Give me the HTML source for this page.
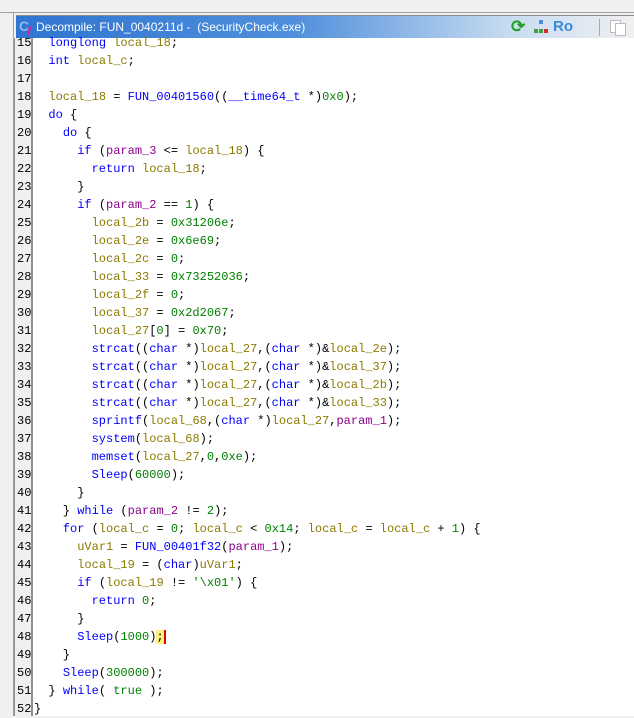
<!DOCTYPE html>
<html><head><style>
body{margin:0;width:634px;height:716px;overflow:hidden;background:#f0f0f0;position:relative;font-family:"Liberation Sans",sans-serif}
#top{position:absolute;left:0;top:0;width:634px;height:12px;background:#f0f0f0;border-bottom:1px solid #a0a0a0}
#leftp{position:absolute;left:0;top:13px;width:13px;height:703px;background:#f0f0f0;border-right:1px solid #a0a0a0}
#title{position:absolute;left:16px;top:15px;width:618px;height:23px;background:linear-gradient(90deg,#2f74d0 0%,#4f8fdc 45%,#c8dcf0 80%,#f0f0f0 100%);border-top:1px solid #888}
#title .t{position:absolute;left:20px;top:4px;color:#fff;font-size:12px;white-space:pre}
#title .ic{position:absolute;left:3px;top:2px;font:bold 14px "Liberation Sans",sans-serif;color:#8ab8f0}
#title .ic b{position:absolute;left:8px;top:6px;color:#e020a0;font-size:12px;font-style:italic}
#gut{position:absolute;left:14px;top:38px;width:16px;height:678px;background:#f0f0f0;border-right:2px solid #909090;border-left:1px solid #909090}
#code{position:absolute;left:33px;top:38px;width:601px;height:678px;background:#fff}
pre{margin:0;font:12px/18px "Liberation Mono",monospace;position:absolute;top:-4px;color:#000}
#nums{left:-16px}
#src{left:1px}
.k{color:#0000ff}.f{color:#0000ff}.v{color:#8c7a00}.p{color:#8b008b}.n{color:#008000}
.cur{background:#fff080;border-right:2px solid #e00000}
</style></head><body>
<div id="top"></div>
<div id="leftp"></div>
<div id="title"><div class="ic">C<b>f</b></div><div class="t">Decompile: FUN_0040211d -  (SecurityCheck.exe)</div>
<div style="position:absolute;left:495px;top:1px;color:#20a020;font:bold 17px sans-serif">⟳</div>
<div style="position:absolute;left:518px;top:4px;width:14px;height:14px"><div style="position:absolute;left:5px;top:0;width:4px;height:4px;background:#4a90e0"></div><div style="position:absolute;left:0;top:9px;width:4px;height:4px;background:#40a040"></div><div style="position:absolute;left:5px;top:9px;width:4px;height:4px;background:#40a040"></div><div style="position:absolute;left:10px;top:9px;width:4px;height:4px;background:#d03030"></div></div>
<div style="position:absolute;left:537px;top:2px;color:#3a8ae0;font:bold 15px sans-serif">Ro</div>
<div style="position:absolute;left:583px;top:3px;width:1px;height:17px;background:#aaa"></div>
<div style="position:absolute;left:594px;top:4px;width:9px;height:11px;border:1px solid #bbb;background:#fff"></div>
<div style="position:absolute;left:599px;top:7px;width:9px;height:11px;border:1px solid #bbb;background:#fff"></div>
<div style="position:absolute;left:619px;top:3px;width:1px;height:17px;background:#aaa"></div>
<div style="position:absolute;left:626px;top:4px;width:8px;height:15px;border:1px solid #4a80c0;background:#fff"></div>
</div>
<div id="gut"></div>
<div id="code">
<pre id="nums">15
16
17
18
19
20
21
22
23
24
25
26
27
28
29
30
31
32
33
34
35
36
37
38
39
40
41
42
43
44
45
46
47
48
49
50
51
52</pre>
<pre id="src">  <span class="k">longlong</span> <span class="v">local_18</span>;
  <span class="k">int</span> <span class="v">local_c</span>;

  <span class="v">local_18</span> = <span class="f">FUN_00401560</span>((<span class="k">__time64_t</span> *)<span class="n">0x0</span>);
  <span class="k">do</span> {
    <span class="k">do</span> {
      <span class="k">if</span> (<span class="p">param_3</span> &lt;= <span class="v">local_18</span>) {
        <span class="k">return</span> <span class="v">local_18</span>;
      }
      <span class="k">if</span> (<span class="p">param_2</span> == <span class="n">1</span>) {
        <span class="v">local_2b</span> = <span class="n">0x31206e</span>;
        <span class="v">local_2e</span> = <span class="n">0x6e69</span>;
        <span class="v">local_2c</span> = <span class="n">0</span>;
        <span class="v">local_33</span> = <span class="n">0x73252036</span>;
        <span class="v">local_2f</span> = <span class="n">0</span>;
        <span class="v">local_37</span> = <span class="n">0x2d2067</span>;
        <span class="v">local_27</span>[<span class="n">0</span>] = <span class="n">0x70</span>;
        <span class="f">strcat</span>((<span class="k">char</span> *)<span class="v">local_27</span>,(<span class="k">char</span> *)&amp;<span class="v">local_2e</span>);
        <span class="f">strcat</span>((<span class="k">char</span> *)<span class="v">local_27</span>,(<span class="k">char</span> *)&amp;<span class="v">local_37</span>);
        <span class="f">strcat</span>((<span class="k">char</span> *)<span class="v">local_27</span>,(<span class="k">char</span> *)&amp;<span class="v">local_2b</span>);
        <span class="f">strcat</span>((<span class="k">char</span> *)<span class="v">local_27</span>,(<span class="k">char</span> *)&amp;<span class="v">local_33</span>);
        <span class="f">sprintf</span>(<span class="v">local_68</span>,(<span class="k">char</span> *)<span class="v">local_27</span>,<span class="p">param_1</span>);
        <span class="f">system</span>(<span class="v">local_68</span>);
        <span class="f">memset</span>(<span class="v">local_27</span>,<span class="n">0</span>,<span class="n">0xe</span>);
        <span class="f">Sleep</span>(<span class="n">60000</span>);
      }
    } <span class="k">while</span> (<span class="p">param_2</span> != <span class="n">2</span>);
    <span class="k">for</span> (<span class="v">local_c</span> = <span class="n">0</span>; <span class="v">local_c</span> &lt; <span class="n">0x14</span>; <span class="v">local_c</span> = <span class="v">local_c</span> + <span class="n">1</span>) {
      <span class="v">uVar1</span> = <span class="f">FUN_00401f32</span>(<span class="p">param_1</span>);
      <span class="v">local_19</span> = (<span class="k">char</span>)<span class="v">uVar1</span>;
      <span class="k">if</span> (<span class="v">local_19</span> != <span class="n">'\x01'</span>) {
        <span class="k">return</span> <span class="n">0</span>;
      }
      <span class="f">Sleep</span>(<span class="n">1000</span>)<span class="cur">;</span>
    }
    <span class="f">Sleep</span>(<span class="n">300000</span>);
  } <span class="k">while</span>( <span class="n">true</span> );
}</pre>
</div>
</body></html>
